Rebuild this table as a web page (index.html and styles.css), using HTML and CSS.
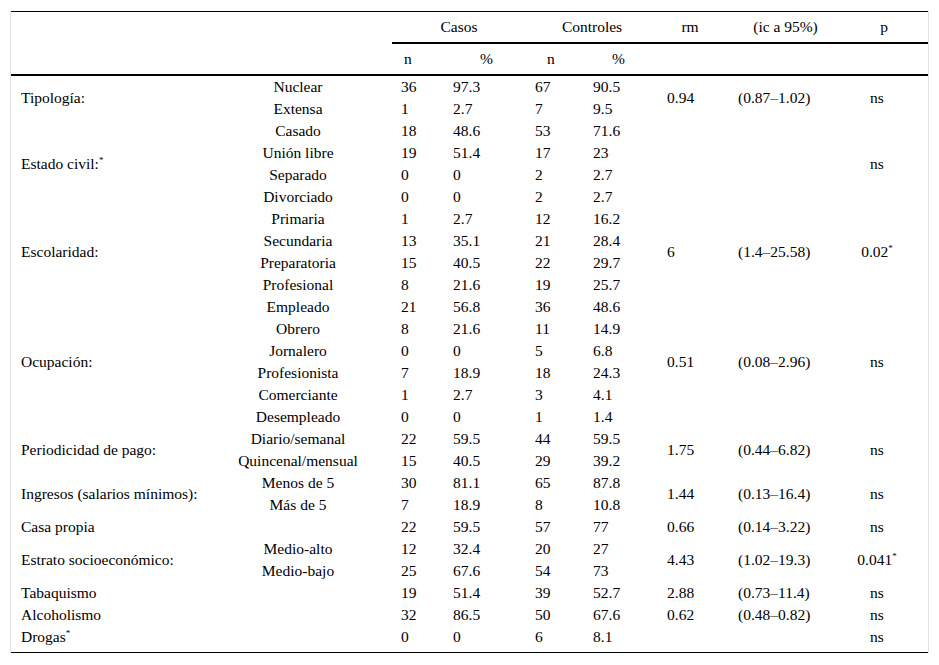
FILE: index.html
```html
<!DOCTYPE html>
<html lang="es">
<head>
<meta charset="utf-8">
<title>Tabla</title>
<link rel="stylesheet" href="styles.css">
</head>
<body>
<div class="frame">
<table class="data">
<colgroup>
<col class="w1"><col class="w2"><col class="w3"><col class="w4"><col class="w5"><col class="w6"><col class="w7"><col class="w8"><col class="w9">
</colgroup>
<thead>
<tr class="h1">
<th colspan="2" rowspan="2" class="blank"></th>
<th colspan="2" class="grp">Casos</th>
<th colspan="2" class="grp">Controles</th>
<th class="grp rmh">rm</th>
<th class="grp ich">(ic a 95%)</th>
<th class="grp ph">p</th>
</tr>
<tr class="h2">
<th class="n1">n</th><th class="pc1">%</th><th class="n2">n</th><th class="pc2">%</th><th></th><th></th><th></th>
</tr>
</thead>
<tbody>
<tr><td rowspan="2" class="lab">Tipología:</td><td class="cat">Nuclear</td><td>36</td><td>97.3</td><td>67</td><td>90.5</td><td rowspan="2">0.94</td><td rowspan="2">(0.87–1.02)</td><td rowspan="2" class="p">ns</td></tr>
<tr><td class="cat">Extensa</td><td>1</td><td>2.7</td><td>7</td><td>9.5</td></tr>

<tr><td rowspan="4" class="lab">Estado civil:<sup>*</sup></td><td class="cat">Casado</td><td>18</td><td>48.6</td><td>53</td><td>71.6</td><td rowspan="4"></td><td rowspan="4"></td><td rowspan="4" class="p">ns</td></tr>
<tr><td class="cat">Unión libre</td><td>19</td><td>51.4</td><td>17</td><td>23</td></tr>
<tr><td class="cat">Separado</td><td>0</td><td>0</td><td>2</td><td>2.7</td></tr>
<tr><td class="cat">Divorciado</td><td>0</td><td>0</td><td>2</td><td>2.7</td></tr>

<tr><td rowspan="4" class="lab">Escolaridad:</td><td class="cat">Primaria</td><td>1</td><td>2.7</td><td>12</td><td>16.2</td><td rowspan="4">6</td><td rowspan="4">(1.4–25.58)</td><td rowspan="4" class="p">0.02<sup>*</sup></td></tr>
<tr><td class="cat">Secundaria</td><td>13</td><td>35.1</td><td>21</td><td>28.4</td></tr>
<tr><td class="cat">Preparatoria</td><td>15</td><td>40.5</td><td>22</td><td>29.7</td></tr>
<tr><td class="cat">Profesional</td><td>8</td><td>21.6</td><td>19</td><td>25.7</td></tr>

<tr><td rowspan="6" class="lab">Ocupación:</td><td class="cat">Empleado</td><td>21</td><td>56.8</td><td>36</td><td>48.6</td><td rowspan="6">0.51</td><td rowspan="6">(0.08–2.96)</td><td rowspan="6" class="p">ns</td></tr>
<tr><td class="cat">Obrero</td><td>8</td><td>21.6</td><td>11</td><td>14.9</td></tr>
<tr><td class="cat">Jornalero</td><td>0</td><td>0</td><td>5</td><td>6.8</td></tr>
<tr><td class="cat">Profesionista</td><td>7</td><td>18.9</td><td>18</td><td>24.3</td></tr>
<tr><td class="cat">Comerciante</td><td>1</td><td>2.7</td><td>3</td><td>4.1</td></tr>
<tr><td class="cat">Desempleado</td><td>0</td><td>0</td><td>1</td><td>1.4</td></tr>

<tr><td rowspan="2" class="lab">Periodicidad de pago:</td><td class="cat">Diario/semanal</td><td>22</td><td>59.5</td><td>44</td><td>59.5</td><td rowspan="2">1.75</td><td rowspan="2">(0.44–6.82)</td><td rowspan="2" class="p">ns</td></tr>
<tr><td class="cat">Quincenal/mensual</td><td>15</td><td>40.5</td><td>29</td><td>39.2</td></tr>

<tr><td rowspan="2" class="lab">Ingresos (salarios mínimos):</td><td class="cat">Menos de 5</td><td>30</td><td>81.1</td><td>65</td><td>87.8</td><td rowspan="2">1.44</td><td rowspan="2">(0.13–16.4)</td><td rowspan="2" class="p">ns</td></tr>
<tr><td class="cat">Más de 5</td><td>7</td><td>18.9</td><td>8</td><td>10.8</td></tr>

<tr><td class="lab">Casa propia</td><td class="cat"></td><td>22</td><td>59.5</td><td>57</td><td>77</td><td>0.66</td><td>(0.14–3.22)</td><td class="p">ns</td></tr>

<tr><td rowspan="2" class="lab">Estrato socioeconómico:</td><td class="cat">Medio-alto</td><td>12</td><td>32.4</td><td>20</td><td>27</td><td rowspan="2">4.43</td><td rowspan="2">(1.02–19.3)</td><td rowspan="2" class="p">0.041<sup>*</sup></td></tr>
<tr><td class="cat">Medio-bajo</td><td>25</td><td>67.6</td><td>54</td><td>73</td></tr>

<tr><td class="lab">Tabaquismo</td><td class="cat"></td><td>19</td><td>51.4</td><td>39</td><td>52.7</td><td>2.88</td><td>(0.73–11.4)</td><td class="p">ns</td></tr>
<tr><td class="lab">Alcoholismo</td><td class="cat"></td><td>32</td><td>86.5</td><td>50</td><td>67.6</td><td>0.62</td><td>(0.48–0.82)</td><td class="p">ns</td></tr>
<tr class="last"><td class="lab">Drogas<sup>*</sup></td><td class="cat"></td><td>0</td><td>0</td><td>6</td><td>8.1</td><td></td><td></td><td class="p">ns</td></tr>
</tbody>
</table>
</div>
</body>
</html>
```

FILE: styles.css
```css
html, body {
  margin: 0;
  padding: 0;
  background: #ffffff;
}

body {
  font-family: "Liberation Serif", "Times New Roman", serif;
  font-size: 15.5px;
  color: #000000;
}

.frame {
  margin: 11px 0 0 10px;
  width: 917px;
  border-left: 1px solid #e2e2e2;
  border-right: 1px solid #e2e2e2;
}

.data {
  width: 917px;
  table-layout: fixed;
  border-collapse: separate;
  border-spacing: 0;
}

.w1 { width: 219px; }
.w2 { width: 162px; }
.w3 { width: 52px; }
.w4 { width: 82px; }
.w5 { width: 58px; }
.w6 { width: 74px; }
.w7 { width: 71px; }
.w8 { width: 91px; }
.w9 { width: 108px; }

th {
  font-weight: normal;
  padding: 0;
  text-align: center;
  vertical-align: middle;
}

.h1 th {
  border-top: 1px solid #000;
  line-height: 30px;
}

.h1 th.grp {
  border-bottom: 2px solid #000;
}

.h1 th.blank {
  border-bottom: 2px solid #000;
}

.h2 th {
  line-height: 30px;
  border-bottom: 2px solid #000;
}

.h2 th.n1 { text-align: left; padding-left: 12px; }
.h2 th.pc1 { text-align: left; padding-left: 36px; }
.h2 th.n2 { text-align: left; padding-left: 21px; }
.h2 th.pc2 { text-align: left; padding-left: 28px; }

.rmh { padding-right: 7px; }
.ich { padding-left: 22px; }
.ph { padding-left: 20px; }

td {
  padding: 0 0 0 9px;
  line-height: 22px;
  text-align: left;
  vertical-align: middle;
  white-space: nowrap;
}

td.lab {
  padding-left: 10px;
}

td.cat {
  padding: 0 26px 0 0;
  text-align: center;
}

td.p {
  padding: 0 0 0 6px;
  text-align: center;
}

.last td {
  padding-bottom: 4px;
  border-bottom: 1px solid #000;
}

.last td.cat {
  padding-bottom: 4px;
}

sup {
  font-size: 9px;
  line-height: 0;
  vertical-align: 6px;
}
```
